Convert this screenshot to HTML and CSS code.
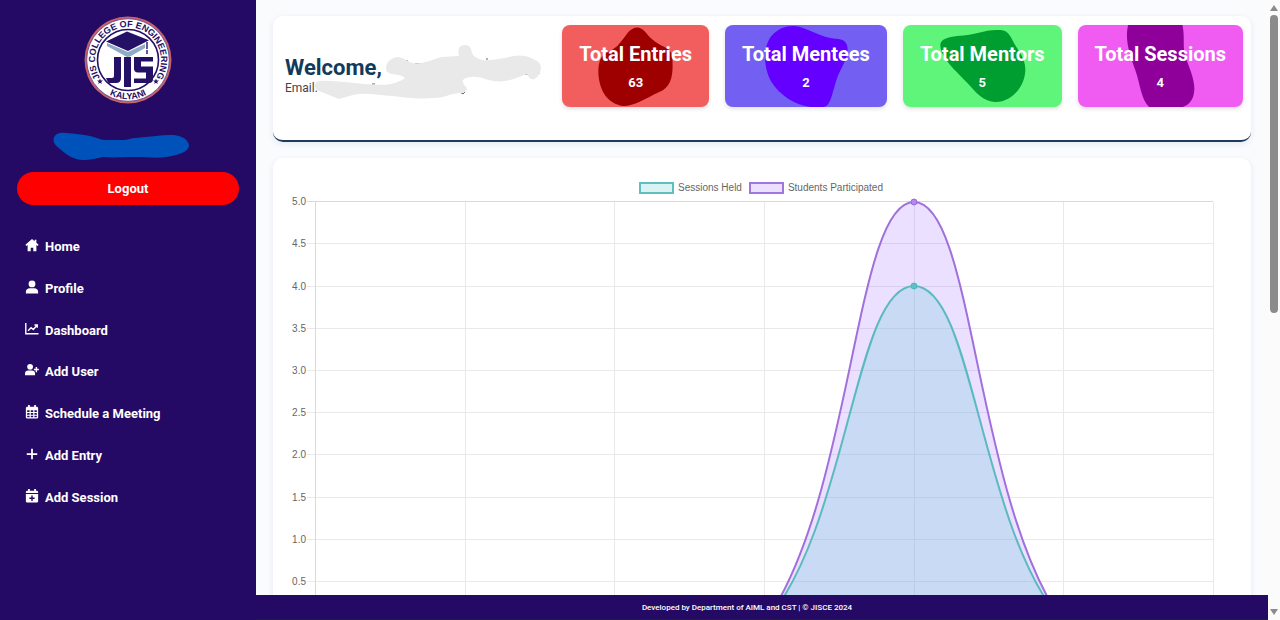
FILE: index.html
```html
<!DOCTYPE html>
<html lang="en">
<head>
<meta charset="utf-8">
<meta name="viewport" content="width=device-width, initial-scale=1">
<title>JISCE Mentoring Dashboard</title>
<link rel="stylesheet" href="styles.css">
</head>
<body class="page">
<aside class="sidebar">
  <svg class="logo" viewBox="0 0 90 90" role="img" aria-label="JIS College of Engineering, Kalyani">
    <defs>
      <path id="ring-top" d="M19.700 66.200 A33 33 0 1 1 70.300 66.200"/>
      <path id="ring-bottom" d="M15.500 71 A39.500 39.500 0 0 0 74.500 71"/>
      <path id="star" d="M0-3 .8-.9 3-.9 1.200.5 1.800 2.600 0 1.300-1.800 2.600-1.200.5-3-.9-.8-.9z"/>
    </defs>
    <circle cx="45" cy="45" r="43.500" fill="#c9616c"/>
    <circle cx="45" cy="45" r="41.500" fill="#fff"/>
    <circle cx="45" cy="45" r="41.300" fill="none" stroke="#34206f" stroke-width=".7"/>
    <circle cx="45" cy="45" r="30.500" fill="#fff" stroke="#241065" stroke-width="1.600"/>
    <text class="logo-text"><textPath href="#ring-top" startOffset="50%" text-anchor="middle">JIS COLLEGE OF ENGINEERING</textPath></text>
    <text class="logo-text"><textPath href="#ring-bottom" startOffset="50%" text-anchor="middle">KALYANI</textPath></text>
    <use href="#star" x="17" y="66.500" fill="#241065"/>
    <use href="#star" x="73" y="66.500" fill="#241065"/>
    <path fill="#8eabc6" d="M24 28 45 37 62 29v4L47 41.500 44 42 24 31z"/>
    <path fill="#241065" d="M23 26.500 44 16.500 66 25.300 45 36z"/>
    <path fill="none" stroke="#241065" stroke-width="1.400" d="M64 27v7M64 35v4"/>
    <path fill="#241065" d="M31 42h7v21q0 5-5 5h-7q-2-2-3-5h6q2 0 2-2zM41 42h7v30h-7zM51 42h19v4.500H58v5h12v12.500q0 4-4 4H51v-4.500h12v-6H55q-4 0-4-4z"/>
  </svg>
  <svg class="user-mark" viewBox="0 0 136 30" aria-hidden="true"><path fill="#0052bb" d="M.5 9C1 3 6 1 13 2c12 1 22 2 31 5 3 1 5 2 8 2h18c5 0 8-2 13-2 12-1 24-3 36-3 10 0 17 5 17 11-1 6-9 8-17 10-13 3-24 1-37 1-12 0-21 1-32 0-6 1-13 3-20 3-8 0-15-4-23-11Q0 13 .5 9z"/></svg>
  <button class="logout" type="button">Logout</button>
  <nav class="nav">
    <a class="nav-link" href="#home"><svg class="icon" viewBox="0 0 16 16"><path d="M8 1 .5 7.700l1 1.300L3 8v7h3.500v-4h3v4H13V8l1.500 1 1-1.300L13 5.500V2h-2v1.700z"/></svg>Home</a>
    <a class="nav-link" href="#profile"><svg class="icon" viewBox="0 0 16 16"><circle cx="8" cy="4.500" r="3.900"/><path d="M1 15.500v-2C1 11 3 9.500 5.500 9.500h5c2.500 0 4.500 1.500 4.500 4v2z"/></svg>Profile</a>
    <a class="nav-link" href="#dashboard"><svg class="icon" viewBox="0 0 16 16"><path class="line thin" d="M.9 1v12.500h14.500M3.500 10 7 6.500l2.500 2L14 3.500M10.800 3.500H14v3"/></svg>Dashboard</a>
    <a class="nav-link" href="#add-user"><svg class="icon" viewBox="0 0 16 16"><circle cx="5.800" cy="4.300" r="3.300"/><path d="M0 14v-2c0-2.200 1.500-3.400 3.500-3.400H8c2 0 3.500 1.200 3.500 3.400v2z"/><path class="line thin" d="M13 4.500v6M10.200 7.500h5.600"/></svg>Add User</a>
    <a class="nav-link" href="#schedule"><svg class="icon" viewBox="0 0 16 16"><path fill-rule="evenodd" d="M3.500 0h2v2h5V0h2v2H14l1 1v11.500l-1 1H2l-1-1V3l1-1h1.500zM2.500 6v2h2.700V6zm4.100 0v2h2.800V6zm4.200 0v2h2.700V6zM2.500 9.200v2h2.700v-2zm4.100 0v2h2.800v-2zm4.200 0v2h2.700v-2zM2.500 12.400V14h2.700v-1.600zm4.100 0V14h2.800v-1.600zm4.200 0V14h2.700v-1.600z"/></svg>Schedule a Meeting</a>
    <a class="nav-link" href="#add-entry"><svg class="icon" viewBox="0 0 16 16"><path class="line" d="M8 2v12M2 8h12"/></svg>Add Entry</a>
    <a class="nav-link" href="#add-session"><svg class="icon" viewBox="0 0 16 16"><path fill-rule="evenodd" d="M3.500 0h2v2h5V0h2v2H14l1 1v1.500H1V3l1-1h1.500zM1 5.700h14v8.800l-1 1H2l-1-1zM7.200 7.500v2.300H5v1.600h2.200v2.200h1.600v-2.200H11V9.800H8.800V7.500z"/></svg>Add Session</a>
  </nav>
</aside>

<div class="main">
  <main class="content">
    <section class="card welcome-card">
      <div class="welcome">
        <h1 class="welcome-title">Welcome,</h1>
        <p class="welcome-email">Email:</p>
        <svg class="scribble" viewBox="315 40 230 62" aria-hidden="true">
          <path class="specks" d="M406 61h2M415 64h12M486 59h2M398 74h4M525 74h6M538 71l1 3M372 84h3M396 85l4-3M448 92h12l3 2 2-2M340 92h7"/>
          <path fill="#e9e9e9" d="M386 68c0-6 6-11 12-11 6 1 9 4 14 6 10 2 18-3 30-6l17-1c-2-9 2-11 6-11 5 0 6 3 7 8 2 4 6 6 10 7 12 1 22-2 32-4 10-2 18 2 23 5 5 3 5 9 1 15-5 6-9 3-11-2-10 4-22 9-33 7-9-1-14-5-23-4-9 1-10 4-6 9 4 3 1 7-4 7-10 0-16 5-27 5-16 1-27 0-41-2-15-1-29-4-40-1l-14 4-20-8c-6-2-5-10 1-10 15-1 29 2 44 3 14 1 27 2 36-3 8-3 4-4-1-6-7-1-13-1-13-7z"/>
        </svg>
      </div>
      <div class="stats">
        <article class="stat red"><svg class="blob" viewBox="0 0 146 82"><path d="M66 7q9-9 17 0 6 8 15 13 13 5 12 13c1 15 0 29-13 34-15 7-25 14-36 14-17-2-25-18-25-35 1-19 8-16 19-25q6-7 11-14z"/></svg><h2 class="stat-title">Total Entries</h2><p class="stat-value">63</p></article>
        <article class="stat blue"><svg class="blob" viewBox="0 0 161 82"><path d="M46 11C56 0 69-1 80 4c13 5 19 9 33 10 7 1 10 5 9 14-1 8-8 17-11 27-4 12-6 27-13 27-21 3-42-9-52-25-8-14-9-35 0-46z"/></svg><h2 class="stat-title">Total Mentees</h2><p class="stat-value">2</p></article>
        <article class="stat green"><svg class="blob" viewBox="0 0 158 82"><path d="M37 20c0-6 8-8 17-9 20-1 27-7 43-6 9 0 11 9 16 17 6 9 9 14 9 24-1 17-15 32-31 31-11-1-18-9-26-18-12-13-28-26-28-39z"/></svg><h2 class="stat-title">Total Mentors</h2><p class="stat-value">5</p></article>
        <article class="stat pink"><svg class="blob" viewBox="0 0 165 82"><path d="M50-1h54c3 13 0 20 3 32 4 12 10 24 9 35-1 12-9 17-18 17H72c-9-7-10-24-15-38C52 30 46 16 50-1z"/></svg><h2 class="stat-title">Total Sessions</h2><p class="stat-value">4</p></article>
      </div>
    </section>

    <section class="card chart-card" aria-label="Sessions chart">
      <div class="legend">
        <span class="legend-item"><i class="swatch teal"></i>Sessions Held</span>
        <span class="legend-item"><i class="swatch purple"></i>Students Participated</span>
      </div>
      <svg class="chart" viewBox="289 194 946 440">
        <path class="grid" d="M307 201.500H1213M307 243.500H1213M307 286.500H1213M307 328.500H1213M307 370.500H1213M307 412.500H1213M307 454.500H1213M307 497.500H1213M307 539.500H1213M307 581.500H1213M465.500 202V632M614.500 202V632M764.500 202V632M914.500 202V632M1063.500 202V632M1213.500 202V632"/>
        <path class="axis" d="M315.500 202V632M307 201.500H1213"/>
        <g class="ticks">
          <text x="306" y="205">5.0</text><text x="306" y="247">4.5</text><text x="306" y="290">4.0</text><text x="306" y="332">3.5</text><text x="306" y="374">3.0</text><text x="306" y="416">2.5</text><text x="306" y="458">2.0</text><text x="306" y="501">1.5</text><text x="306" y="543">1.0</text><text x="306" y="585">0.5</text>
        </g>
        <path class="area-purple" d="M764 624C854 497 854 202 914 202S974 497 1064 624z"/>
        <path class="area-teal" d="M764 624C849 528 854 286 914 286S979 528 1064 624z"/>
        <path class="line-purple" d="M764 624C854 497 854 202 914 202S974 497 1064 624"/>
        <path class="line-teal" d="M764 624C849 528 854 286 914 286S979 528 1064 624"/>
        <circle class="dot-purple" cx="914" cy="202" r="3"/>
        <circle class="dot-teal" cx="914" cy="286" r="3"/>
      </svg>
    </section>
  </main>
  <footer class="footer">Developed by Department of AIML and CST | © JISCE 2024</footer>
</div>

<div class="scrollbar" aria-hidden="true">
  <svg class="arrow" viewBox="0 0 12 12"><path d="M6 3 10 9H2z"/></svg>
  <div class="track"><div class="thumb"></div></div>
  <svg class="arrow" viewBox="0 0 12 12"><path d="M2 3h8L6 9z"/></svg>
</div>
</body>
</html>
```

FILE: styles.css
```css
* { box-sizing: border-box; }

.page {
  margin: 0;
  height: 100vh;
  overflow: hidden;
  display: grid;
  grid-template-columns: 256px 1fr 12px;
  font-family: Roboto, "Liberation Sans", sans-serif;
  background: #f9fbfd;
}

/* Sidebar */
.sidebar {
  background: #240a64;
  color: #fff;
  padding: 15px 17px;
  display: flex;
  flex-direction: column;
}
.logo { width: 90px; height: 90px; align-self: center; }
.logo-text { font: bold 9px "Liberation Sans", sans-serif; fill: #241065; }
.user-mark { width: 136px; height: 30px; margin: 26px 0 11px 36px; }
.logout {
  height: 33px;
  border: 0;
  border-radius: 17px;
  background: #f00;
  color: #fff;
  font: 700 13px Roboto, sans-serif;
}
.nav {
  height: 292px;
  margin-top: 21px;
  padding-left: 8px;
  display: grid;
  grid-template-rows: repeat(7, 1fr);
}
.nav-link {
  display: flex;
  align-items: center;
  gap: 6px;
  color: #fff;
  text-decoration: none;
  font-size: 13px;
  font-weight: 700;
}
.icon { width: 14px; height: 14px; margin-bottom: 3px; fill: #fff; overflow: visible; }
.icon .line { fill: none; stroke: #fff; stroke-width: 2; }
.icon .thin { stroke-width: 1.6; }

/* Main column */
.main { min-width: 0; min-height: 0; display: flex; flex-direction: column; }
.content {
  flex: 1;
  min-height: 0;
  overflow: hidden;
  padding: 16px 17px 0;
}
.card { background: #fff; border-radius: 10px; box-shadow: 0 2px 6px rgba(30, 60, 110, .09); }

.welcome-card {
  display: flex;
  justify-content: space-between;
  min-height: 126px;
  padding: 9px 8px 8px 12px;
  border-bottom: 2px solid #1c3a5c;
}
.welcome { position: relative; padding-top: 30px; white-space: nowrap; }
.welcome-title { margin: 0; font-size: 22px; line-height: 26px; font-weight: 700; color: #123a5a; }
.welcome-email { margin: 0; font-size: 12px; line-height: 14px; color: #444; }
.scribble { position: absolute; left: 30px; top: 15px; width: 230px; height: 62px; }
.specks { fill: none; stroke: #5b636d; stroke-width: 1; }

.stats { display: flex; align-items: flex-start; gap: 16px; }
.stat {
  position: relative;
  overflow: hidden;
  height: 82px;
  padding: 16px 17px;
  border-radius: 8px;
  color: #fff;
  text-align: center;
  white-space: nowrap;
  box-shadow: 0 2px 4px rgba(0, 0, 0, .12);
}
.blob { position: absolute; inset: 0; width: 100%; height: 100%; }
.stat-title { position: relative; margin: 0; font-size: 20px; line-height: 26px; font-weight: 700; }
.stat-value { position: relative; margin: 7px 0 0; font-size: 13px; line-height: 18px; font-weight: 700; }
.red { background: #f25e5e; }
.red .blob { fill: #9e0000; }
.blue { background: #735ff2; }
.blue .blob { fill: #6300ff; }
.green { background: #5ff57a; }
.green .blob { fill: #009d30; }
.pink { background: #f05cf2; }
.pink .blob { fill: #8f009b; }

/* Chart */
.chart-card { margin-top: 16px; padding: 23px 16px; }
.legend {
  display: flex;
  justify-content: center;
  gap: 7px;
  height: 13px;
  padding-right: 2px;
  font: 10px/13px "Liberation Sans", sans-serif;
  color: #666;
}
.legend-item { display: flex; align-items: center; gap: 4px; }
.swatch { width: 35px; height: 12px; border: 2px solid; }
.teal { background: #dbf2f2; border-color: #5dbfc0; }
.purple { background: #ebe0ff; border-color: #a075e0; }
.chart { display: block; width: 100%; }
.grid { fill: none; stroke: #e9e9e9; }
.axis { fill: none; stroke: #d9d9d9; }
.ticks { font: 10px "Liberation Sans", sans-serif; fill: #666; text-anchor: end; }
.area-purple { fill: rgba(153, 102, 255, .2); }
.area-teal { fill: rgba(120, 205, 220, .3); }
.line-purple, .line-teal { fill: none; stroke-width: 2; }
.line-purple { stroke: #a070dc; }
.line-teal { stroke: #5bbac0; }
.dot-purple { fill: #b28ae8; stroke: #9966e6; stroke-width: 1; }
.dot-teal { fill: #60c0c8; stroke: #4bb8be; stroke-width: 1; }

.footer {
  height: 25px;
  padding-right: 30px;
  background: #240a64;
  border-bottom: 1px solid #222;
  color: #fff;
  font-size: 8px;
  font-weight: 500;
  line-height: 26px;
  text-align: center;
}

/* Scrollbar */
.scrollbar { display: flex; flex-direction: column; padding: 2px 0; background: #fbfbfb; }
.arrow { width: 12px; height: 12px; fill: #8b8b8b; }
.track { flex: 1; padding: 1px 2px; }
.thumb { width: 8px; height: 298px; border-radius: 4px; background: #8b8b8b; }
```
